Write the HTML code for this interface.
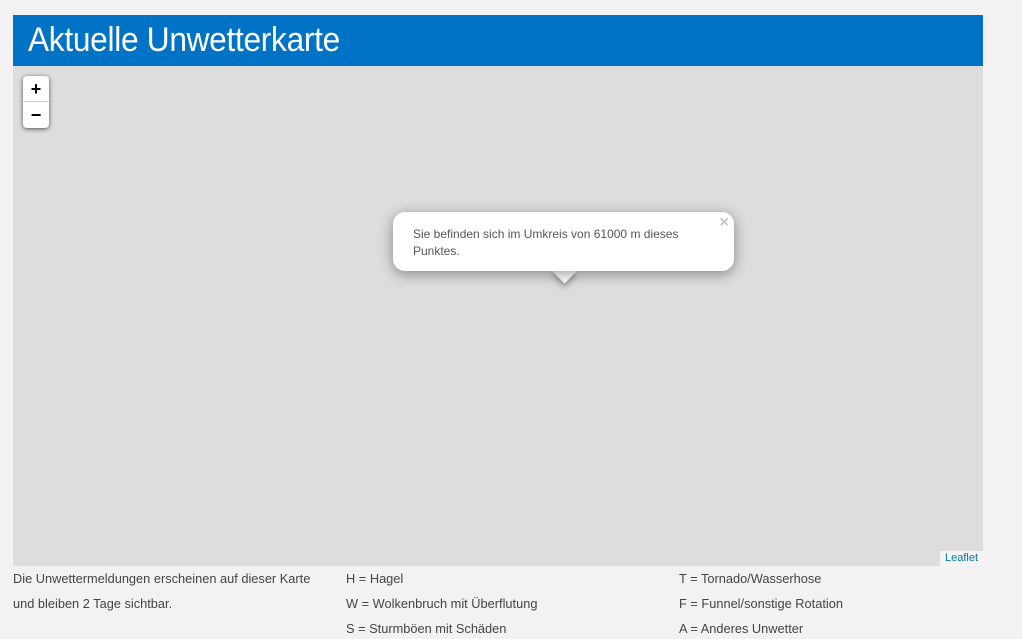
<!DOCTYPE html>
<html><head><meta charset="utf-8"><style>
body{margin:0;background:#f2f2f2;width:1022px;height:639px;overflow:hidden;font-family:"Liberation Sans",sans-serif;}
.hdr{position:absolute;left:13px;top:15px;width:970px;height:51px;background:#0073c6;}
.hdr span{position:absolute;left:15px;top:6px;color:#fff;font-size:34px;font-weight:normal;transform:scaleX(0.93);transform-origin:left;white-space:nowrap;letter-spacing:-0.3px}
.map{position:absolute;left:13px;top:66px;width:970px;height:500px;background:#dddddd;}
.zoom{position:absolute;left:10px;top:10px;width:26px;height:52px;background:#fff;border-radius:4px;box-shadow:0 1px 5px rgba(0,0,0,.65);}
.zoom div{height:26px;line-height:26px;text-align:center;font-weight:bold;font-size:18px;color:#000}
.zoom div:first-child{border-bottom:1px solid #ccc;height:25px}
.pop{position:absolute;left:380px;top:146px;width:341px;height:59px;background:#fff;border-radius:12px;box-shadow:0 3px 14px rgba(0,0,0,.4);}
.pop p{margin:0;position:absolute;left:20px;top:14px;width:300px;font-size:12px;line-height:17px;color:#555}
.pop .x{position:absolute;right:5px;top:2px;color:#c3c3c3;font-size:16px;font-weight:bold}
.tip{position:absolute;left:543px;top:197px;width:17px;height:17px;background:#fff;transform:rotate(45deg);box-shadow:3px 3px 6px rgba(0,0,0,.3)}
.attr{position:absolute;right:0;bottom:0;background:rgba(255,255,255,.7);font-size:11px;color:#0078a8;padding:0 5px;height:15px;line-height:15px}
.ft{position:absolute;font-size:12.8px;color:#444;white-space:nowrap}
</style></head><body>
<div class="hdr"><span>Aktuelle Unwetterkarte</span></div>
<div class="map">
<div class="zoom"><div>+</div><div>−</div></div>
<div class="tip"></div>
<div class="pop"><span class="x">×</span><p>Sie befinden sich im Umkreis von 61000 m dieses Punktes.</p></div>
<div class="attr">Leaflet</div>
</div>
<div class="ft" style="left:13px;top:571px">Die Unwettermeldungen erscheinen auf dieser Karte</div>
<div class="ft" style="left:13px;top:596px">und bleiben 2 Tage sichtbar.</div>
<div class="ft" style="left:346px;top:571px">H = Hagel</div>
<div class="ft" style="left:346px;top:596px">W = Wolkenbruch mit Überflutung</div>
<div class="ft" style="left:346px;top:621px">S = Sturmböen mit Schäden</div>
<div class="ft" style="left:679px;top:571px">T = Tornado/Wasserhose</div>
<div class="ft" style="left:679px;top:596px">F = Funnel/sonstige Rotation</div>
<div class="ft" style="left:679px;top:621px">A = Anderes Unwetter</div>
</body></html>
